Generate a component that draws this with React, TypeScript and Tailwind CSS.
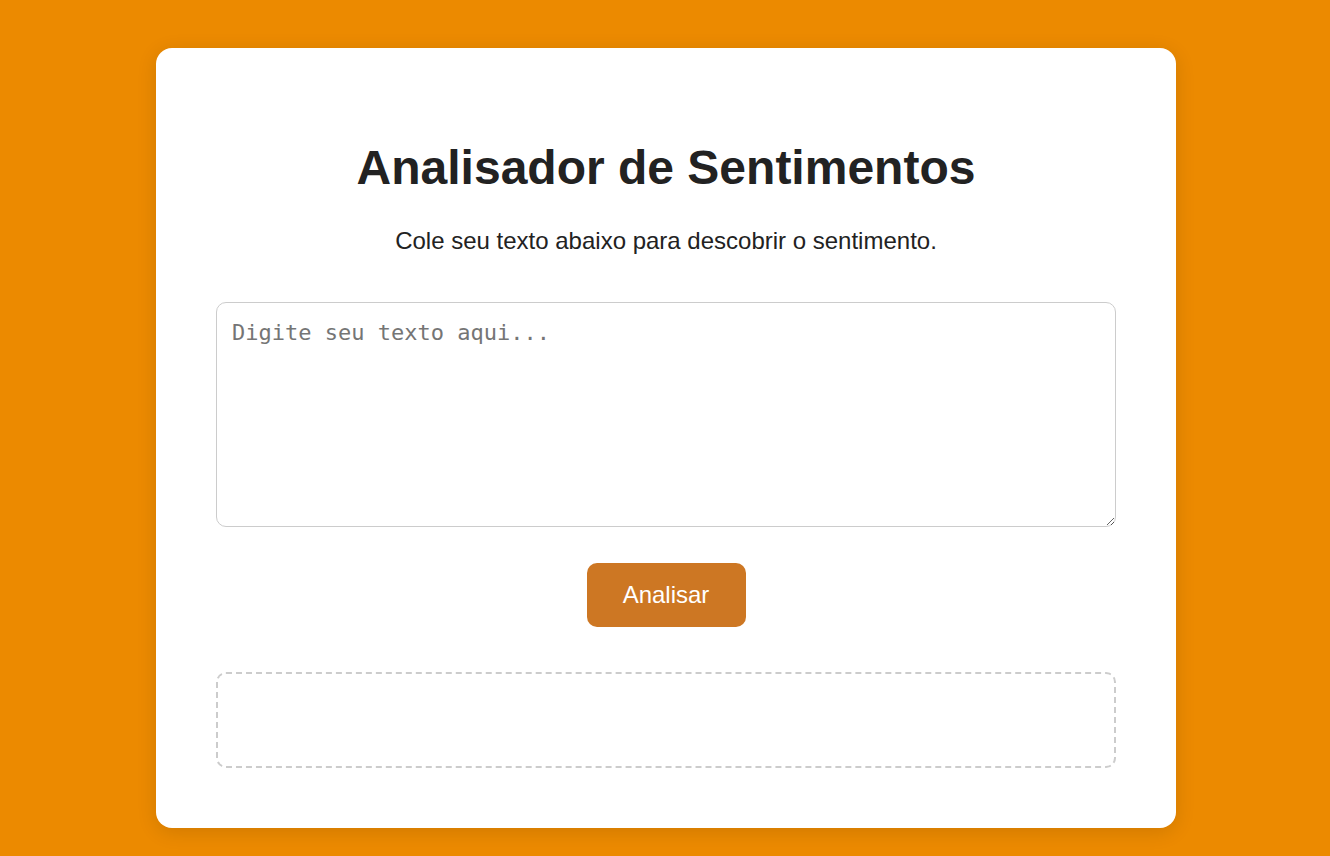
import React from "react";

export default function App() {
  return (
    <div className="min-h-[856px] w-full bg-[#ec8a00] flex justify-center pl-[2px] pt-[48px] pb-[28px]" style={{ fontFamily: '"Liberation Sans", Arial, sans-serif' }}>
      <div className="w-[1020px] h-[780px] bg-white rounded-[16px] shadow-[0_4px_20px_rgba(0,0,0,0.12)] px-[60px] pt-[92px] pb-[60px] flex flex-col">
        <h1 className="text-[48px] leading-[56px] font-bold text-[#222] text-center" style={{ fontFamily: '"Liberation Sans", Arial, sans-serif' }}>
          Analisador de Sentimentos
        </h1>
        <p className="mt-[31px] text-[24px] leading-[28px] text-[#222] text-center">
          Cole seu texto abaixo para descobrir o sentimento.
        </p>
        <textarea
          placeholder="Digite seu texto aqui..."
          className="mt-[47px] w-[900px] h-[225px] border border-[#cccccc] rounded-[10px] pl-[15px] pr-[15px] pt-[16px] pb-[12px] text-[22px] leading-[28px] text-[#222] placeholder:text-[#757575] outline-none"
          style={{ fontFamily: '"DejaVu Sans Mono", monospace' }}
        />
        <div className="mt-[36px] flex justify-center">
          <button className="w-[159px] h-[64px] rounded-[10px] bg-[#cd7723] text-white text-[24px]" style={{ fontFamily: '"Liberation Sans", Arial, sans-serif' }}>
            Analisar
          </button>
        </div>
        <div className="mt-[45px] w-[900px] h-[96px] border-2 border-dashed border-[#cccccc] rounded-[10px]"></div>
      </div>
    </div>
  );
}
